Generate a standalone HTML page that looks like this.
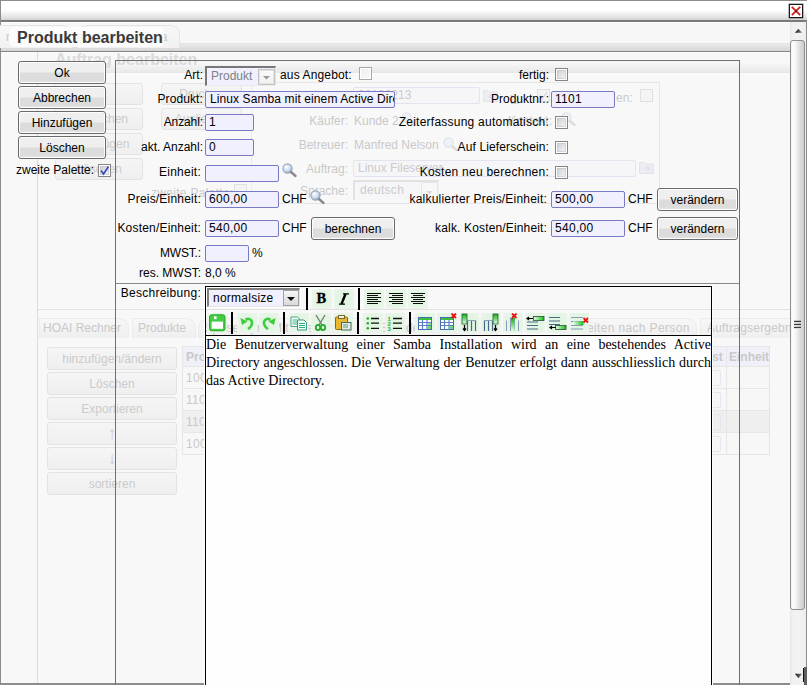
<!DOCTYPE html>
<html><head><meta charset="utf-8">
<style>
*{box-sizing:border-box;margin:0;padding:0}
html,body{width:807px;height:685px;overflow:hidden;background:#f8f8f8}
body{position:relative;font-family:"Liberation Sans",sans-serif;font-size:12px;color:#000}
.a{position:absolute}
.f{color:#c9c9c9}
.lbl{position:absolute;white-space:nowrap;text-align:right}
.txt{position:absolute;white-space:nowrap}
.btn{position:absolute;height:23px;border:1px solid #6a6a6a;border-radius:3px;
 background:linear-gradient(#fbfbfb 0,#efefef 1px,#efefef 10px,#dcdcdc 11px,#dcdcdc 18px,#e6e6e6 21px);
 box-shadow:inset 0 0 0 1px #fdfdfd;text-align:center;line-height:22px;font-size:12px;color:#000}
.fbtn{position:absolute;height:23px;border:1px solid #e3e3e3;border-radius:3px;
 background:linear-gradient(#f5f5f5,#efefef);text-align:center;line-height:22px;color:#cbcbcb}
.inp{position:absolute;height:17px;border:1px solid #7a7ac4;border-radius:2px;background:#f0f0ff;
 padding-left:3px;line-height:15px;font-size:12px;color:#000;white-space:nowrap;overflow:hidden;letter-spacing:0.3px}
.finp{position:absolute;height:17px;border:1px solid #e4e4f0;border-radius:2px;background:#f6f6f9;
 padding-left:4px;line-height:15px;color:#cbcbcb;white-space:nowrap;overflow:hidden}
.cb{position:absolute;width:13px;height:13px;border:1px solid #858585;
 background:linear-gradient(135deg,#c6c9cf 0,#e2e3e6 50%,#f8f8f8 100%);box-shadow:inset 0 0 0 1px #fff,inset 0 0 0 2px rgba(190,192,198,0.55)}
.fcb{position:absolute;width:13px;height:13px;border:1px solid #e0e0e0;background:#f4f4f4}
.hl{position:absolute;height:1px}
.ib{position:absolute;background:radial-gradient(ellipse at 50% 45%,#dcf6dc 0,#e5f5e5 55%,#eef5ee 100%)}
.vl{position:absolute;width:1px}
</style></head><body>

<!-- outer frame -->
<div class="a" style="left:0;top:0;width:807px;height:685px;border-left:1px solid #8c8c8c;border-top:1px solid #8c8c8c;border-bottom:2px solid #8c8c8c"></div>
<!-- top bar -->
<div class="a" style="left:1px;top:1px;width:806px;height:21px;background:linear-gradient(#ffffff 0,#ffffff 9px,#e4e4e4 16px,#d2d2d2 19px);border-bottom:2px solid #7a7a7a"></div>
<!-- close btn -->
<div class="a" style="left:789px;top:4px;width:14px;height:14px;border:1px solid #1a1a1a;box-shadow:0 0 0 0.4px #555;background:#fff">
 <svg width="12" height="12" viewBox="0 0 12 12" style="position:absolute;left:0;top:0"><path d="M1.8 1.8L10.2 10.2M10.2 1.8L1.8 10.2" stroke="#d02424" stroke-width="1.9"/><circle cx="6" cy="6" r="1" fill="#5a1010"/></svg>
</div>


<!-- header band -->
<div class="a" style="left:1px;top:22px;width:789px;height:31px;background:linear-gradient(#ffffff 0,#ffffff 1px,#f7f7f7 1px,#f7f7f7 21px,#e4e4e4 21px,#e4e4e4 22px,#ebebeb 22px,#d4d4d4 29px,#858585 29px,#858585 30px,#fdfdfd 30px)"></div>
<!-- faded tabs in header -->
<div class="a" style="left:-10px;top:25px;width:83px;height:23px;border:1px solid #e4e4e4;border-bottom:none;border-radius:0 9px 0 0;background:linear-gradient(#f7f7f7,#f1f1f1)"></div>
<div class="txt f" style="left:6px;top:30px">r</div>
<div class="txt f" style="left:37px;top:30px">Firma</div>
<div class="a" style="left:77px;top:25px;width:103px;height:23px;border:1px solid #e4e4e4;border-bottom:none;border-radius:9px 9px 0 0;background:linear-gradient(#f7f7f7,#f1f1f1)"></div>
<div class="txt f" style="left:77px;top:30px;letter-spacing:0.6px">alle nach Firma</div>
<!-- title tab -->
<div class="a" style="left:9px;top:27px;width:155px;height:20px;background:rgba(255,255,255,0.72);border-radius:5px"></div>
<div class="txt" style="left:17px;top:28px;font-size:16px;font-weight:bold;color:#3a3a3a;line-height:20px">Produkt bearbeiten</div>

<!-- faded background dialog -->
<div class="vl" style="left:37px;top:52px;height:631px;background:#dcdcdc"></div>

<div class="a" style="left:38px;top:62px;width:752px;height:12px;background:linear-gradient(rgba(240,240,240,0) 0,#f1f1f1 5px,#e9e9e9 10px,#e2e2e2 11px,#fbfbfb 11px)"></div>
<div class="txt" style="left:55px;top:50px;font-size:16px;font-weight:bold;color:#dadada;line-height:20px">Auftrag bearbeiten</div>
<div class="fbtn" style="left:55px;top:83px;width:88px;height:22px;line-height:21px">Ok</div>
<div class="fbtn" style="left:55px;top:108px;width:88px;height:22px;line-height:21px">Abbrechen</div>
<div class="fbtn" style="left:55px;top:133px;width:88px;height:22px;line-height:21px">Hinzufügen</div>
<div class="fbtn" style="left:55px;top:158px;width:88px;height:22px;line-height:21px">Löschen</div>
<div class="fbtn" style="left:161px;top:83px;width:81px;height:22px;line-height:21px">Drucken</div>
<div class="fbtn" style="left:161px;top:108px;width:81px;height:22px;line-height:21px">Ausliefern</div>

<div class="txt f" style="left:151px;top:186px;letter-spacing:0.3px">zweite Palette:</div>
<div class="fcb" style="left:234px;top:184px"></div>
<div class="finp" style="left:353px;top:87px;width:127px">20100213</div>
<div class="lbl f" style="right:459px;top:114px">Käufer:</div>
<div class="txt f" style="left:354px;top:114px">Kunde 2</div>
<div class="lbl f" style="right:459px;top:138px">Betreuer:</div>
<div class="txt f" style="left:354px;top:138px">Manfred Nelson</div>
<div class="lbl f" style="right:459px;top:162px">Auftrag:</div>
<div class="finp" style="left:353px;top:160px;width:283px">Linux Fileserver</div>
<div class="lbl f" style="right:459px;top:184px">Sprache:</div>
<div class="finp" style="left:353px;top:180px;width:86px;height:20px;line-height:17px;border:none;border-top:2px solid #e2e2e2;border-left:2px solid #e2e2e2;border-right:1px solid #f0f0f0;border-radius:0;padding-left:5px;letter-spacing:0.3px;background:#f6f6f8">deutsch</div>
<div class="lbl f" style="right:255px;top:114px">Kontakt:</div>
<div class="txt f" style="left:616px;top:91px">en:</div>
<div class="fcb" style="left:640px;top:89px"></div>

<div class="a" style="left:251px;top:82px;width:409px;height:122px;border:1px solid #e6e6e6;border-left-color:#ececec"></div>

<div class="hl" style="left:38px;top:309px;width:752px;background:#e2e2e2"></div>
<svg class="a" style="left:401px;top:112px" width="16" height="16"><circle cx="5.5" cy="5.5" r="4.6" fill="#eef2f7" stroke="#dfe3e8" stroke-width="1.2"/><path d="M9 9L13.5 13" stroke="#dedede" stroke-width="2.4" stroke-linecap="round"/></svg>
<svg class="a" style="left:443px;top:137px" width="16" height="16"><circle cx="5.5" cy="5.5" r="4.6" fill="#eef2f7" stroke="#dfe3e8" stroke-width="1.2"/><path d="M9 9L13.5 13" stroke="#dedede" stroke-width="2.4" stroke-linecap="round"/></svg>
<svg class="a" style="left:561px;top:112px" width="16" height="16"><circle cx="5.5" cy="5.5" r="4.6" fill="#eef2f7" stroke="#dfe3e8" stroke-width="1.2"/><path d="M9 9L13.5 13" stroke="#dedede" stroke-width="2.4" stroke-linecap="round"/></svg>
<svg class="a" style="left:483px;top:88px" width="16" height="14"><path d="M0.5 2.5H5L6.5 4H14.5V13.5H0.5Z" fill="#ececf2" stroke="#e2e2e8"/><circle cx="8.5" cy="8.5" r="1.6" fill="none" stroke="#d6d8e6"/></svg>
<svg class="a" style="left:639px;top:160px" width="16" height="14"><path d="M0.5 2.5H5L6.5 4H14.5V13.5H0.5Z" fill="#ececf2" stroke="#e2e2e8"/><circle cx="8.5" cy="8.5" r="1.6" fill="none" stroke="#d6d8e6"/></svg>
<div class="txt f" style="left:510px;top:93px">Li</div>
<svg class="a" style="left:537px;top:89px" width="13" height="13"><rect x="0.5" y="0.5" width="12" height="12" fill="#f3f3f3" stroke="#e0e0e0"/><path d="M3 6.5L5.5 9.5L10 3" stroke="#d8dcea" stroke-width="1.4" fill="none"/></svg>
<svg class="a" style="left:421px;top:182px" width="18" height="19"><rect x="0.5" y="0.5" width="16" height="17" fill="#f8f8f8" stroke="#e6e6e6"/><path d="M5 9H12L8.5 12.5Z" fill="#dcdcdc"/></svg>
<!-- faded tabs -->
<div class="a" style="left:39px;top:318px;width:90px;height:20px;border:1px solid #ebebeb;border-bottom:none;border-radius:0 10px 0 0;background:linear-gradient(#f7f7f7,#efefef)"></div>
<div class="txt f" style="left:43px;top:321px">HOAI Rechner</div>
<div class="a" style="left:132px;top:318px;width:64px;height:20px;border:1px solid #ebebeb;border-bottom:none;border-radius:0 10px 0 0;background:linear-gradient(#f7f7f7,#efefef)"></div>
<div class="txt f" style="left:138px;top:321px">Produkte</div>
<div class="a" style="left:198px;top:318px;width:300px;height:20px;border:1px solid #ebebeb;border-bottom:none;border-radius:10px 10px 0 0;background:linear-gradient(#f7f7f7,#efefef)"></div>
<div class="txt f" style="left:204px;top:321px;letter-spacing:0.3px">Spesen pro Mitarbeiter</div>
<div class="txt f" style="left:380px;top:321px;letter-spacing:0.3px">Stunden</div>
<div class="a" style="left:560px;top:318px;width:137px;height:20px;border:1px solid #ebebeb;border-bottom:none;border-radius:0 10px 0 0;background:linear-gradient(#f7f7f7,#efefef)"></div>
<div class="txt f" style="left:587px;top:321px;letter-spacing:0.35px">eiten nach Person</div>
<div class="a" style="left:700px;top:318px;width:100px;height:20px;border:1px solid #ebebeb;border-bottom:none;border-radius:0 10px 0 0;background:linear-gradient(#f7f7f7,#efefef)"></div>
<div class="txt f" style="left:707px;top:321px;letter-spacing:0.2px">Auftragsergebnis</div>
<div class="fbtn" style="left:47px;top:347px;width:130px">hinzufügen/ändern</div>
<div class="fbtn" style="left:47px;top:372px;width:130px">Löschen</div>
<div class="fbtn" style="left:47px;top:397px;width:130px">Exportieren</div>
<div class="fbtn" style="left:47px;top:422px;width:130px;font-size:17px;line-height:21px">↑</div>
<div class="fbtn" style="left:47px;top:447px;width:130px;font-size:17px;line-height:21px">↓</div>
<div class="fbtn" style="left:47px;top:472px;width:130px">sortieren</div>
<!-- faded table -->
<div class="a" style="left:182px;top:346px;width:588px;height:109px;border:1px solid #e6e6e6;background:#f7f7f7"></div>
<div class="a" style="left:183px;top:347px;width:586px;height:20px;background:#f0f0f8"></div>
<div class="txt f" style="left:186px;top:350px;font-weight:bold">Pro</div>
<div class="txt f" style="left:712px;top:350px;font-weight:bold">st</div>
<div class="txt f" style="left:729px;top:350px;font-weight:bold">Einheit</div>
<div class="hl" style="left:183px;top:366px;width:586px;background:#e6e6e6"></div>
<div class="hl" style="left:183px;top:388px;width:586px;background:#e6e6e6"></div>
<div class="a" style="left:183px;top:411px;width:586px;height:21px;background:#efefef"></div>
<div class="hl" style="left:183px;top:410px;width:586px;background:#e6e6e6"></div>
<div class="hl" style="left:183px;top:432px;width:586px;background:#e6e6e6"></div>
<div class="vl" style="left:726px;top:347px;height:107px;background:#e6e6e6"></div>
<div class="txt f" style="left:186px;top:371px;letter-spacing:0.3px">1001</div>
<div class="txt f" style="left:186px;top:393px;letter-spacing:0.3px">1101</div>
<div class="txt f" style="left:186px;top:415px;letter-spacing:0.3px">1101</div>
<div class="txt f" style="left:186px;top:437px;letter-spacing:0.3px">1001</div>
<div class="a" style="left:705px;top:370px;width:16px;height:16px;border:1px solid #e6e6f0;border-radius:2px"></div>
<div class="a" style="left:705px;top:392px;width:16px;height:16px;border:1px solid #e6e6f0;border-radius:2px"></div>
<div class="a" style="left:705px;top:414px;width:16px;height:16px;border:1px solid #e6e6f0;border-radius:2px"></div>
<div class="a" style="left:705px;top:436px;width:16px;height:16px;border:1px solid #e6e6f0;border-radius:2px"></div>


<!-- ===== FRONT DIALOG ===== -->
<div class="btn" style="left:18px;top:61px;width:88px">Ok</div>
<div class="btn" style="left:18px;top:86px;width:88px">Abbrechen</div>
<div class="btn" style="left:18px;top:111px;width:88px">Hinzufügen</div>
<div class="btn" style="left:18px;top:136px;width:88px">Löschen</div>
<div class="txt" style="left:16px;top:163px">zweite Palette:</div>
<div class="cb" style="left:98px;top:164px;background:linear-gradient(135deg,#c8c8d8,#f4f4fa)"><svg width="11" height="11" viewBox="0 0 11 11" style="position:absolute;left:0;top:0"><path d="M2 5.5L4.5 9L9.5 1.5" stroke="#3a4ab0" stroke-width="1.6" fill="none"/></svg></div>

<!-- form panel border -->
<div class="a" style="left:115px;top:60px;width:625px;height:630px;border:1px solid #707070;border-bottom:none"></div>
<div class="hl" style="left:116px;top:283px;width:623px;background:#8a8a8a"></div>

<!-- row Art -->
<div class="lbl" style="right:604px;top:68px">Art:</div>
<div class="a" style="left:205px;top:66px;width:71px;height:20px;border-top:2px solid #777;border-left:2px solid #777;border-right:1px solid #e2e2e2;border-bottom:1px solid #eaeaea;background:#f0f0ff"></div>
<div class="txt" style="left:211px;top:69px;color:#808080">Produkt</div>
<div class="a" style="left:258px;top:69px;width:17px;height:16px;border:1px solid #c4c4c4;box-shadow:inset 0 0 0 1px #e4e4e4;background:linear-gradient(#fbfbfb,#f0f0f0)"><svg width="15" height="14" style="position:absolute;left:0;top:0"><path d="M4 6L11 6L7.5 9.5Z" fill="#9a9a9a"/></svg></div>
<div class="txt" style="left:280px;top:68px;letter-spacing:0.14px">aus Angebot:</div>
<div class="cb" style="left:359px;top:67px;border-color:#a8a8a8;background:linear-gradient(135deg,#eeeeee,#f8f8f8);box-shadow:inset 0 0 0 1px #fff"></div>
<div class="lbl" style="right:258px;top:68px">fertig:</div>
<div class="cb" style="left:555px;top:68px"></div>

<!-- row Produkt -->
<div class="lbl" style="right:604px;top:92px;letter-spacing:0.1px">Produkt:</div>
<div class="inp" style="left:205px;top:91px;width:190px;letter-spacing:0.1px;padding-left:4px">Linux Samba mit einem Active Directory</div>
<div class="lbl" style="right:258px;top:92px">Produktnr.:</div>
<div class="inp" style="left:551px;top:91px;width:64px">1101</div>

<!-- row Anzahl -->
<div class="lbl" style="right:604px;top:115px;letter-spacing:-0.1px">Anzahl:</div>
<div class="inp" style="left:205px;top:114px;width:49px">1</div>
<div class="lbl" style="right:258px;top:115px;letter-spacing:0.24px">Zeiterfassung automatisch:</div>
<div class="cb" style="left:555px;top:116px"></div>

<!-- row akt Anzahl -->
<div class="lbl" style="right:604px;top:140px">akt. Anzahl:</div>
<div class="inp" style="left:205px;top:139px;width:49px">0</div>
<div class="lbl" style="right:258px;top:140px;letter-spacing:0.12px">Auf Lieferschein:</div>
<div class="cb" style="left:555px;top:141px"></div>

<!-- row Einheit -->
<div class="lbl" style="right:606px;top:165px;letter-spacing:0.25px">Einheit:</div>
<div class="inp" style="left:205px;top:165px;width:74px"></div>
<div class="lbl" style="right:258px;top:165px;letter-spacing:0.25px">Kosten neu berechnen:</div>
<div class="cb" style="left:555px;top:166px"></div>

<!-- row Preis -->
<div class="lbl" style="right:606px;top:192px;letter-spacing:0.2px">Preis/Einheit:</div>
<div class="inp" style="left:205px;top:191px;width:74px">600,00</div>
<div class="txt" style="left:282px;top:192px">CHF</div>
<div class="lbl" style="right:260px;top:192px;letter-spacing:0.2px">kalkulierter Preis/Einheit:</div>
<div class="inp" style="left:551px;top:191px;width:74px">500,00</div>
<div class="txt" style="left:628px;top:192px">CHF</div>
<div class="btn" style="left:657px;top:188px;width:81px">verändern</div>

<!-- row Kosten -->
<div class="lbl" style="right:606px;top:221px;letter-spacing:0.19px">Kosten/Einheit:</div>
<div class="inp" style="left:205px;top:220px;width:74px">540,00</div>
<div class="txt" style="left:282px;top:221px">CHF</div>
<div class="btn" style="left:311px;top:217px;width:84px">berechnen</div>
<div class="lbl" style="right:260px;top:221px;letter-spacing:0.15px">kalk. Kosten/Einheit:</div>
<div class="inp" style="left:551px;top:220px;width:74px">540,00</div>
<div class="txt" style="left:628px;top:221px">CHF</div>
<div class="btn" style="left:657px;top:217px;width:81px">verändern</div>

<!-- row MWST -->
<div class="lbl" style="right:606px;top:246px;letter-spacing:-0.15px">MWST.:</div>
<div class="inp" style="left:205px;top:245px;width:44px"></div>
<div class="txt" style="left:252px;top:246px">%</div>
<div class="lbl" style="right:606px;top:266px">res. MWST:</div>
<div class="txt" style="left:205px;top:266px">8,0 %</div>

<div class="lbl" style="right:606px;top:286px;letter-spacing:0.28px">Beschreibung:</div>


<svg class="a" style="left:282px;top:163px" width="16" height="16"><defs><radialGradient id="lg282" cx="0.4" cy="0.35" r="0.7"><stop offset="0" stop-color="#ffffff"/><stop offset="0.6" stop-color="#c8d8ee"/><stop offset="1" stop-color="#7f9cc8"/></radialGradient></defs><circle cx="5.5" cy="5.5" r="4.6" fill="url(#lg282)" stroke="#9aa6b4" stroke-width="1.1"/><path d="M9 9L13.5 13" stroke="#8a8a8a" stroke-width="2.4" stroke-linecap="round"/></svg>
<svg class="a" style="left:310px;top:190px" width="16" height="16"><defs><radialGradient id="lg310" cx="0.4" cy="0.35" r="0.7"><stop offset="0" stop-color="#ffffff"/><stop offset="0.6" stop-color="#c8d8ee"/><stop offset="1" stop-color="#7f9cc8"/></radialGradient></defs><circle cx="5.5" cy="5.5" r="4.6" fill="url(#lg310)" stroke="#9aa6b4" stroke-width="1.1"/><path d="M9 9L13.5 13" stroke="#8a8a8a" stroke-width="2.4" stroke-linecap="round"/></svg>
<!-- ===== EDITOR ===== -->
<div class="a" style="left:204px;top:284px;width:509px;height:402px;border:1px solid #fdfdfd;border-bottom:none"></div>
<div class="a" style="left:205px;top:286px;width:507px;height:400px;border:1px solid #000;border-bottom:none"></div>
<div class="a" style="left:206px;top:335px;width:505px;height:1px;background:#000"></div>
<div class="a" style="left:206px;top:336px;width:505px;height:349px;background:#fefefe"></div>
<div class="a" style="left:206px;top:336px;width:505px;font-family:'Liberation Serif',serif;font-size:14px;line-height:18px;text-align:justify;color:#000">Die Benutzerverwaltung einer Samba Installation wird an eine bestehendes Active Directory angeschlossen. Die Verwaltung der Benutzer erfolgt dann ausschliesslich durch das Active Directory.</div>
<div class="a" style="left:206px;top:287px;width:95px;height:21px;border:1px solid #fff"></div>
<div class="a" style="left:207px;top:288px;width:93px;height:19px;border-top:2px solid #808080;border-left:2px solid #808080;border-right:1px solid #e4e4e4;border-bottom:1px solid #e4e4e4;background:#f0f0ff"></div>
<div class="txt" style="left:213px;top:291px;letter-spacing:0.25px">normalsize</div>
<div class="a" style="left:283px;top:290px;width:16px;height:16px;border:1px solid #a0a0a0;background:linear-gradient(#f6f6f6,#dadada)"><svg width="14" height="14" style="position:absolute;left:0;top:0"><path d="M3 6L11 6L7 10Z" fill="#111"/></svg></div>
<div class="ib" style="left:312px;top:289px;width:20px;height:20px"></div>
<div class="ib" style="left:334px;top:289px;width:20px;height:20px"></div>
<div class="ib" style="left:364px;top:289px;width:20px;height:20px"></div>
<div class="ib" style="left:386px;top:289px;width:20px;height:20px"></div>
<div class="ib" style="left:408px;top:289px;width:20px;height:20px"></div>
<div class="a" style="left:306px;top:288px;width:2px;height:22px;background:#000"></div>
<div class="a" style="left:358px;top:288px;width:2px;height:22px;background:#000"></div>
<div class="ib" style="left:207px;top:313px;width:20px;height:20px"></div>
<div class="ib" style="left:237px;top:313px;width:20px;height:20px"></div>
<div class="ib" style="left:259px;top:313px;width:20px;height:20px"></div>
<div class="ib" style="left:289px;top:313px;width:20px;height:20px"></div>
<div class="ib" style="left:311px;top:313px;width:20px;height:20px"></div>
<div class="ib" style="left:333px;top:313px;width:20px;height:20px"></div>
<div class="ib" style="left:363px;top:313px;width:20px;height:20px"></div>
<div class="ib" style="left:385px;top:313px;width:20px;height:20px"></div>
<div class="ib" style="left:415px;top:313px;width:20px;height:20px"></div>
<div class="ib" style="left:437px;top:313px;width:20px;height:20px"></div>
<div class="ib" style="left:459px;top:313px;width:20px;height:20px"></div>
<div class="ib" style="left:481px;top:313px;width:20px;height:20px"></div>
<div class="ib" style="left:503px;top:313px;width:20px;height:20px"></div>
<div class="ib" style="left:525px;top:313px;width:20px;height:20px"></div>
<div class="ib" style="left:547px;top:313px;width:20px;height:20px"></div>
<div class="ib" style="left:569px;top:313px;width:20px;height:20px"></div>
<div class="a" style="left:231px;top:312px;width:2px;height:22px;background:#000"></div>
<div class="a" style="left:283px;top:312px;width:2px;height:22px;background:#000"></div>
<div class="a" style="left:357px;top:312px;width:2px;height:22px;background:#000"></div>
<div class="a" style="left:409px;top:312px;width:2px;height:22px;background:#000"></div>
<svg class="a" style="left:312px;top:289px" width="120" height="20">
 <text x="4.6" y="14" font-family="Liberation Serif" font-weight="bold" font-size="14.5" fill="#000" stroke="#000" stroke-width="0.35">B</text>
 <path d="M29.5 15L33.5 5" stroke="#000" stroke-width="2.4"/>
 <path d="M31 4.8H37M27 15.2H33" stroke="#000" stroke-width="1.3"/>
 <g stroke="#0a0a0a" stroke-width="1">
  <path d="M55 4.5H69M55 6.5H66M55 8.5H69M55 10.5H66M55 12.5H69M55 14.5H66"/>
  <path d="M77 4.5H91M80 6.5H91M77 8.5H91M80 10.5H91M77 12.5H91M80 14.5H91"/>
  <path d="M99 4.5H113M101 6.5H111M99 8.5H113M101 10.5H111M99 12.5H113M101 14.5H111"/>
 </g>
</svg>
<svg class="a" style="left:207px;top:313px" width="384" height="20">
 <defs>
  <linearGradient id="gg" x1="0" y1="0" x2="1" y2="1"><stop offset="0" stop-color="#1fb81f"/><stop offset="1" stop-color="#9ef59e"/></linearGradient>
  <linearGradient id="gv" x1="0" y1="0" x2="0" y2="1"><stop offset="0" stop-color="#11b011"/><stop offset="1" stop-color="#e0ffe0"/></linearGradient>
  <linearGradient id="gh" x1="1" y1="0" x2="0" y2="0"><stop offset="0" stop-color="#11c011"/><stop offset="1" stop-color="#e8ffe8"/></linearGradient>
 </defs>
 <!-- save -->
 <rect x="2.5" y="1.8" width="15.5" height="16" rx="2.2" fill="#44cc44" stroke="#2aa82a" stroke-width="1"/>
 <rect x="4.6" y="8.6" width="11.4" height="7.2" fill="#fff"/>
 <rect x="7" y="3.3" width="2.6" height="2.8" fill="#fff"/>
 <!-- undo -->
 <g transform="translate(30,0)">
  <path d="M8.5 6.5 Q13.5 4.5 15 9 Q15.5 13 11 16" stroke="#3ccc3c" stroke-width="2.6" fill="none"/>
  <path d="M3.5 5L5 12L10.5 8.5Z" fill="#3ccc3c"/>
 </g>
 <g transform="translate(52,0)">
  <path d="M11.5 6.5 Q6.5 4.5 5 9 Q4.5 13 9 16" stroke="#3ccc3c" stroke-width="2.6" fill="none"/>
  <path d="M16.5 5L15 12L9.5 8.5Z" fill="#3ccc3c"/>
 </g>
 <!-- copy -->
 <g transform="translate(82,0)">
  <path d="M2 4H8.5L10.5 6V13.5H2Z" fill="#f6fff8" stroke="#3a9a80" stroke-width="0.9"/>
  <path d="M3.5 7H8.5M3.5 9H8.5M3.5 11H8.5" stroke="#40b888" stroke-width="1"/>
  <path d="M8.5 7H15L17.5 9.5V17H8.5Z" fill="#f0fff6" stroke="#2a9070" stroke-width="0.9"/>
  <path d="M10 10.5H16M10 12.5H16M10 14.5H16" stroke="#2ab080" stroke-width="1"/>
 </g>
 <!-- cut -->
 <g transform="translate(104,0)">
  <path d="M5 2L11 12M14 2L8 12" stroke="#7a7a7a" stroke-width="1.4"/>
  <ellipse cx="7" cy="14.5" rx="2.2" ry="2.6" fill="none" stroke="#2aa82a" stroke-width="1.8"/>
  <ellipse cx="12" cy="14.5" rx="2.2" ry="2.6" fill="none" stroke="#2aa82a" stroke-width="1.8"/>
 </g>
 <!-- paste -->
 <g transform="translate(126,0)">
  <rect x="2.5" y="4" width="12" height="12.5" rx="1" fill="#e8b830" stroke="#8a6a10"/>
  <rect x="5.5" y="2.5" width="6" height="3" fill="#f4f0e0" stroke="#7a6a30"/>
  <rect x="8.5" y="9.5" width="9.5" height="7.5" fill="#dfeee6" stroke="#4a6a5a"/>
  <path d="M10 12H15M10 14H15" stroke="#6a9a7a"/>
 </g>
 <!-- ul -->
 <g transform="translate(156,0)">
  <circle cx="4.8" cy="5.5" r="1.3" fill="#2aaa2a"/><circle cx="4.8" cy="10.2" r="1.3" fill="#2aaa2a"/><circle cx="4.8" cy="15.3" r="1.3" fill="#2aaa2a"/>
  <path d="M8 5.5H16M8 10.2H16M8 15.3H16" stroke="#111" stroke-width="1.3"/>
 </g>
 <!-- ol -->
 <g transform="translate(178,0)">
  <text x="2.5" y="8" font-family="Liberation Sans" font-weight="bold" font-size="6" fill="#2aaa2a">1</text>
  <text x="2.5" y="13" font-family="Liberation Sans" font-weight="bold" font-size="6" fill="#2aaa2a">2</text>
  <text x="2.5" y="18" font-family="Liberation Sans" font-weight="bold" font-size="6" fill="#2aaa2a">3</text>
  <path d="M8 5.5H17M8 10.2H17M8 15.3H17" stroke="#111" stroke-width="1.3"/>
 </g>
 <!-- table -->
 <g transform="translate(208,0)">
  <rect x="3.5" y="4.5" width="13" height="12" fill="#fff" stroke="#4a6ab0"/>
  <rect x="4" y="5" width="12" height="2" fill="#3ac03a"/>
  <path d="M4 9.5H16M4 12.5H16M7.5 7V16.5M12 7V16.5" stroke="#5a80c8" stroke-width="1.2"/>
  <rect x="12.5" y="10" width="3.5" height="2" fill="#8ee08e"/><rect x="12.5" y="13" width="3.5" height="3" fill="#6ad86a"/>
 </g>
 <g transform="translate(230,0)">
  <rect x="3.5" y="4.5" width="13" height="12" fill="#fff" stroke="#4a6ab0"/>
  <rect x="4" y="5" width="12" height="2" fill="#3ac03a"/>
  <path d="M4 9.5H16M4 12.5H16M7.5 7V16.5M12 7V16.5" stroke="#5a80c8" stroke-width="1.2"/>
  <rect x="12.5" y="13" width="3.5" height="3" fill="#6ad86a"/>
  <path d="M14.5 0.5L19 5M19 0.5L14.5 5" stroke="#ee1010" stroke-width="1.8"/>
 </g>
 <!-- col left -->
 <g transform="translate(252,0)">
  <rect x="3" y="1" width="5" height="10" fill="url(#gv)" stroke="#2a5a3a" stroke-width="0.8"/>
  <path d="M8.5 7.5V18M12.5 7.5V18M16.5 7.5V18" stroke="#4a6a8a" stroke-width="1.2"/>
  <path d="M8.5 7.5H16.5" stroke="#8aa0b8"/>
  <path d="M5.5 12V17M4 15.5L5.5 17.5L7 15.5" stroke="#000" stroke-width="1.3" fill="none"/>
 </g>
 <!-- col right -->
 <g transform="translate(274,0)">
  <rect x="12" y="1" width="5" height="10" fill="url(#gv)" stroke="#2a5a3a" stroke-width="0.8"/>
  <path d="M3.5 7.5V18M7.5 7.5V18M11.5 7.5V18" stroke="#4a6a8a" stroke-width="1.2"/>
  <path d="M3.5 7.5H11.5" stroke="#8aa0b8"/>
  <path d="M14.5 12V17M13 15.5L14.5 17.5L16 15.5" stroke="#000" stroke-width="1.3" fill="none"/>
 </g>
 <!-- col del -->
 <g transform="translate(296,0)">
  <path d="M3.5 7.5V18M7.5 4.5V18M11.5 4.5V18M15.5 7.5V18" stroke="#8a9ab8" stroke-width="1"/>
  <rect x="8" y="5" width="3.5" height="13" fill="url(#gv)"/>
  <path d="M9 0.5L13.5 5M13.5 0.5L9 5" stroke="#ee1010" stroke-width="1.8"/>
 </g>
 <!-- row above -->
 <g transform="translate(318,0)">
  <rect x="8.5" y="3.5" width="10.5" height="4" fill="url(#gh)" stroke="#2a4a3a" stroke-width="0.8"/>
  <path d="M2 9H13M2 12.5H13M2 16H13" stroke="#4a6a8a" stroke-width="1.2"/>
  <path d="M2 5.5H8M4 4L2 5.5L4 7" stroke="#000" stroke-width="1.2" fill="none"/>
 </g>
 <!-- row below -->
 <g transform="translate(340,0)">
  <path d="M2 4.5H13M2 8H13M2 11.5H13" stroke="#4a6a8a" stroke-width="1.2"/>
  <rect x="8.5" y="12.5" width="10.5" height="4" fill="url(#gh)" stroke="#2a4a3a" stroke-width="0.8"/>
  <path d="M3 14.5H9M5 13L3 14.5L5 16" stroke="#000" stroke-width="1.2" fill="none"/>
 </g>
 <!-- row del -->
 <g transform="translate(362,0)">
  <path d="M2 4.5H14M2 8.5H14M2 12.5H14M2 16H14" stroke="#8a9ab8" stroke-width="1.1"/>
  <rect x="4" y="8.5" width="10.5" height="3.5" fill="url(#gh)"/>
  <path d="M14.5 5L19 9.5M19 5L14.5 9.5" stroke="#ee1010" stroke-width="1.8"/>
 </g>
</svg>

<!-- ===== SCROLLBAR ===== -->
<div class="a" style="left:790px;top:22px;width:16px;height:663px;background:linear-gradient(90deg,#e6e6e6 0,#f0f0f0 2px,#f2f2f2 50%,#ededed 100%)"></div>
<div class="a" style="left:806px;top:20px;width:1px;height:665px;background:#8c8c8c"></div>
<svg class="a" style="left:790px;top:22px" width="16" height="16"><defs><linearGradient id="ag" x1="0" y1="0" x2="1" y2="0"><stop offset="0" stop-color="#111"/><stop offset="1" stop-color="#888"/></linearGradient></defs><path d="M4.9 10.8L8.4 6.8L12.1 10.8Z" fill="url(#ag)"/></svg>
<div class="a" style="left:790px;top:40px;width:15px;height:570px;border:1px solid #8f8f8f;border-radius:3px;background:linear-gradient(90deg,#f0f0f0 0,#ffffff 2px,#f3f3f3 5px,#dcdcdc 9px,#cdcdcd 13px)"></div>
<svg class="a" style="left:792px;top:319px" width="11" height="11"><path d="M2 2.5H9M2 5.5H9M2 8.5H9" stroke="#3a3a3a" stroke-width="1.5"/><path d="M2 3.8H9M2 6.8H9M2 9.8H9" stroke="#ffffff" stroke-width="0.8" opacity="0.8"/></svg>
<svg class="a" style="left:790px;top:667px" width="16" height="16"><path d="M4.9 6.8L12.1 6.8L8.4 11.2Z" fill="url(#ag)"/></svg>
<div class="a" style="left:803px;top:668px;width:1px;height:14px;background:#111"></div>
<div class="a" style="left:804px;top:667px;width:3px;height:18px;background:#606060"></div>
</body></html>
